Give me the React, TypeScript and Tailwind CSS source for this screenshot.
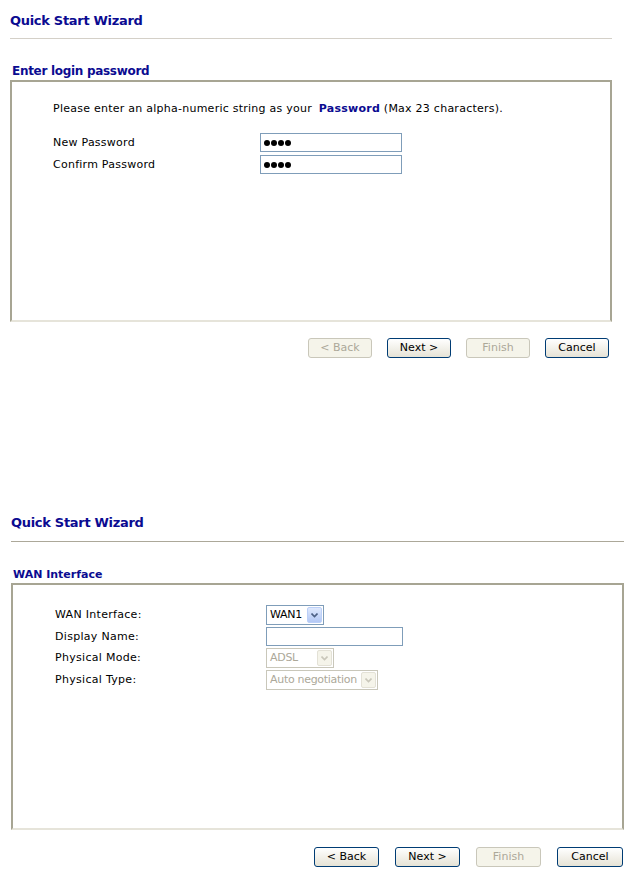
const font = "font-['DejaVu_Sans',Verdana,sans-serif]";

function XpButton({ label, disabled = false, w = "w-[64px]" }: { label: string; disabled?: boolean; w?: string }) {
  return disabled ? (
    <div className={`${w} h-[20px] rounded-[3px] border border-[#c9c7ba] bg-[#f5f4ea] text-[#aca899] text-[11px] leading-[18px] text-center`}>
      {label}
    </div>
  ) : (
    <div className={`${w} h-[20px] rounded-[3px] border border-[#003c74] bg-gradient-to-b from-white to-[#e6e3d6] text-black text-[11px] leading-[18px] text-center`}>
      {label}
    </div>
  );
}

function Chevron({ color }: { color: string }) {
  return (
    <svg width="7" height="5" viewBox="0 0 7 5">
      <path d="M0.5 0.5 L3.5 3.5 L6.5 0.5" fill="none" stroke={color} strokeWidth="1.6" />
    </svg>
  );
}

function Select({ value, w, disabled = false }: { value: string; w: string; disabled?: boolean }) {
  return (
    <div
      className={`${w} h-[20px] flex items-center border ${
        disabled ? "border-[#c9c7ba] text-[#aca899]" : "border-[#7f9db9] text-black"
      } bg-white`}
    >
      <span className="flex-1 pl-[3px] text-[11px] leading-[18px] tracking-[-0.3px] whitespace-nowrap overflow-hidden">{value}</span>
      <div
        className={`w-[15px] h-[16px] mr-[1px] shrink-0 flex items-center justify-center rounded-[2px] ${
          disabled ? "bg-[#f5f4ea] border border-[#e3e1d6]" : "bg-gradient-to-b from-[#dfe9fd] to-[#b3c8f5] border border-[#bcd0f8]"
        }`}
      >
        <Chevron color={disabled ? "#c9c7ba" : "#4d6185"} />
      </div>
    </div>
  );
}

function TextBox({ w, value = "" }: { w: string; value?: string }) {
  return (
    <div className={`${w} h-[19px] border border-[#7f9db9] bg-white flex items-center pl-[3px]`}>
      {value && (
        <span className="flex gap-[1px]">
          {Array.from({ length: 4 }).map((_, i) => (
            <span key={i} className="w-[6px] h-[6px] rounded-full bg-black" />
          ))}
        </span>
      )}
    </div>
  );
}

function Panel({ children, h }: { children: React.ReactNode; h: string }) {
  return (
    <div className={`${h} border-2 border-t-[#a7a593] border-l-[#a7a593] border-r-[#a7a593] border-b-[#e6e4da] bg-white`}>
      {children}
    </div>
  );
}

export default function App() {
  return (
    <div className={`w-[630px] h-[875px] bg-white relative ${font} text-black`}>
      {/* first wizard page */}
      <div className="w-[602px] ml-[10px] pt-[12px]">
        <div className="h-[17px] text-[13px] leading-[17px] font-bold text-[#0b0b91] tracking-[-0.3px]">Quick Start Wizard</div>
        <div className="mt-[9px] h-px bg-[#d4d0c8]" />
        <div className="mt-[25px] ml-[2px] h-[14px] text-[12px] leading-[14px] font-bold text-[#0b0b91] tracking-[-0.3px]">Enter login password</div>
        <div className="mt-[2px]">
          <Panel h="h-[242px]">
            <div className="pl-[41px] pt-[20px] text-[11px] leading-[14px]">
              <div className="tracking-[0.25px]">
                Please enter an alpha-numeric string as your{" "}
                <span className="font-bold text-[#0b0b91] ml-[3px]">Password</span> (Max 23 characters).
              </div>
              <div className="mt-[17px] flex flex-col gap-[3px]">
                <div className="flex items-center">
                  <span className="w-[207px] tracking-[0.25px]">New Password</span>
                  <TextBox w="w-[142px]" value="x" />
                </div>
                <div className="flex items-center">
                  <span className="w-[207px] tracking-[0.25px]">Confirm Password</span>
                  <TextBox w="w-[142px]" value="x" />
                </div>
              </div>
            </div>
          </Panel>
        </div>
        <div className="mt-[16px] flex justify-end gap-[15px] pr-[3px]">
          <XpButton label="< Back" disabled />
          <XpButton label="Next >" />
          <XpButton label="Finish" disabled />
          <XpButton label="Cancel" />
        </div>
      </div>

      {/* second wizard page */}
      <div className="w-[613px] ml-[11px] mt-[156px]">
        <div className="h-[17px] text-[13px] leading-[17px] font-bold text-[#0b0b91] tracking-[-0.3px]">Quick Start Wizard</div>
        <div className="mt-[10px] h-px bg-[#aca899]" />
        <div className="mt-[26px] ml-[2px] h-[14px] text-[11px] leading-[14px] font-bold text-[#0b0b91]">WAN Interface</div>
        <div className="mt-[1px]">
          <Panel h="h-[247px]">
            <div className="pl-[42px] pt-[20px] text-[11px] leading-[14px] flex flex-col gap-[2px]">
              <div className="flex items-center">
                <span className="w-[211px] tracking-[0.3px]">WAN Interface:</span>
                <Select value="WAN1" w="w-[58px]" />
              </div>
              <div className="flex items-center">
                <span className="w-[211px] tracking-[0.3px]">Display Name:</span>
                <TextBox w="w-[137px]" />
              </div>
              <div className="flex items-center">
                <span className="w-[211px] tracking-[0.3px]">Physical Mode:</span>
                <Select value="ADSL" w="w-[68px]" disabled />
              </div>
              <div className="flex items-center">
                <span className="w-[211px] tracking-[0.3px]">Physical Type:</span>
                <Select value="Auto negotiation" w="w-[112px]" disabled />
              </div>
            </div>
          </Panel>
        </div>
        <div className="mt-[17px] flex justify-end gap-[16px] pr-[1px]">
          <XpButton label="< Back" w="w-[65px]" />
          <XpButton label="Next >" w="w-[65px]" />
          <XpButton label="Finish" w="w-[65px]" disabled />
          <XpButton label="Cancel" w="w-[66px]" />
        </div>
      </div>
    </div>
  );
}
